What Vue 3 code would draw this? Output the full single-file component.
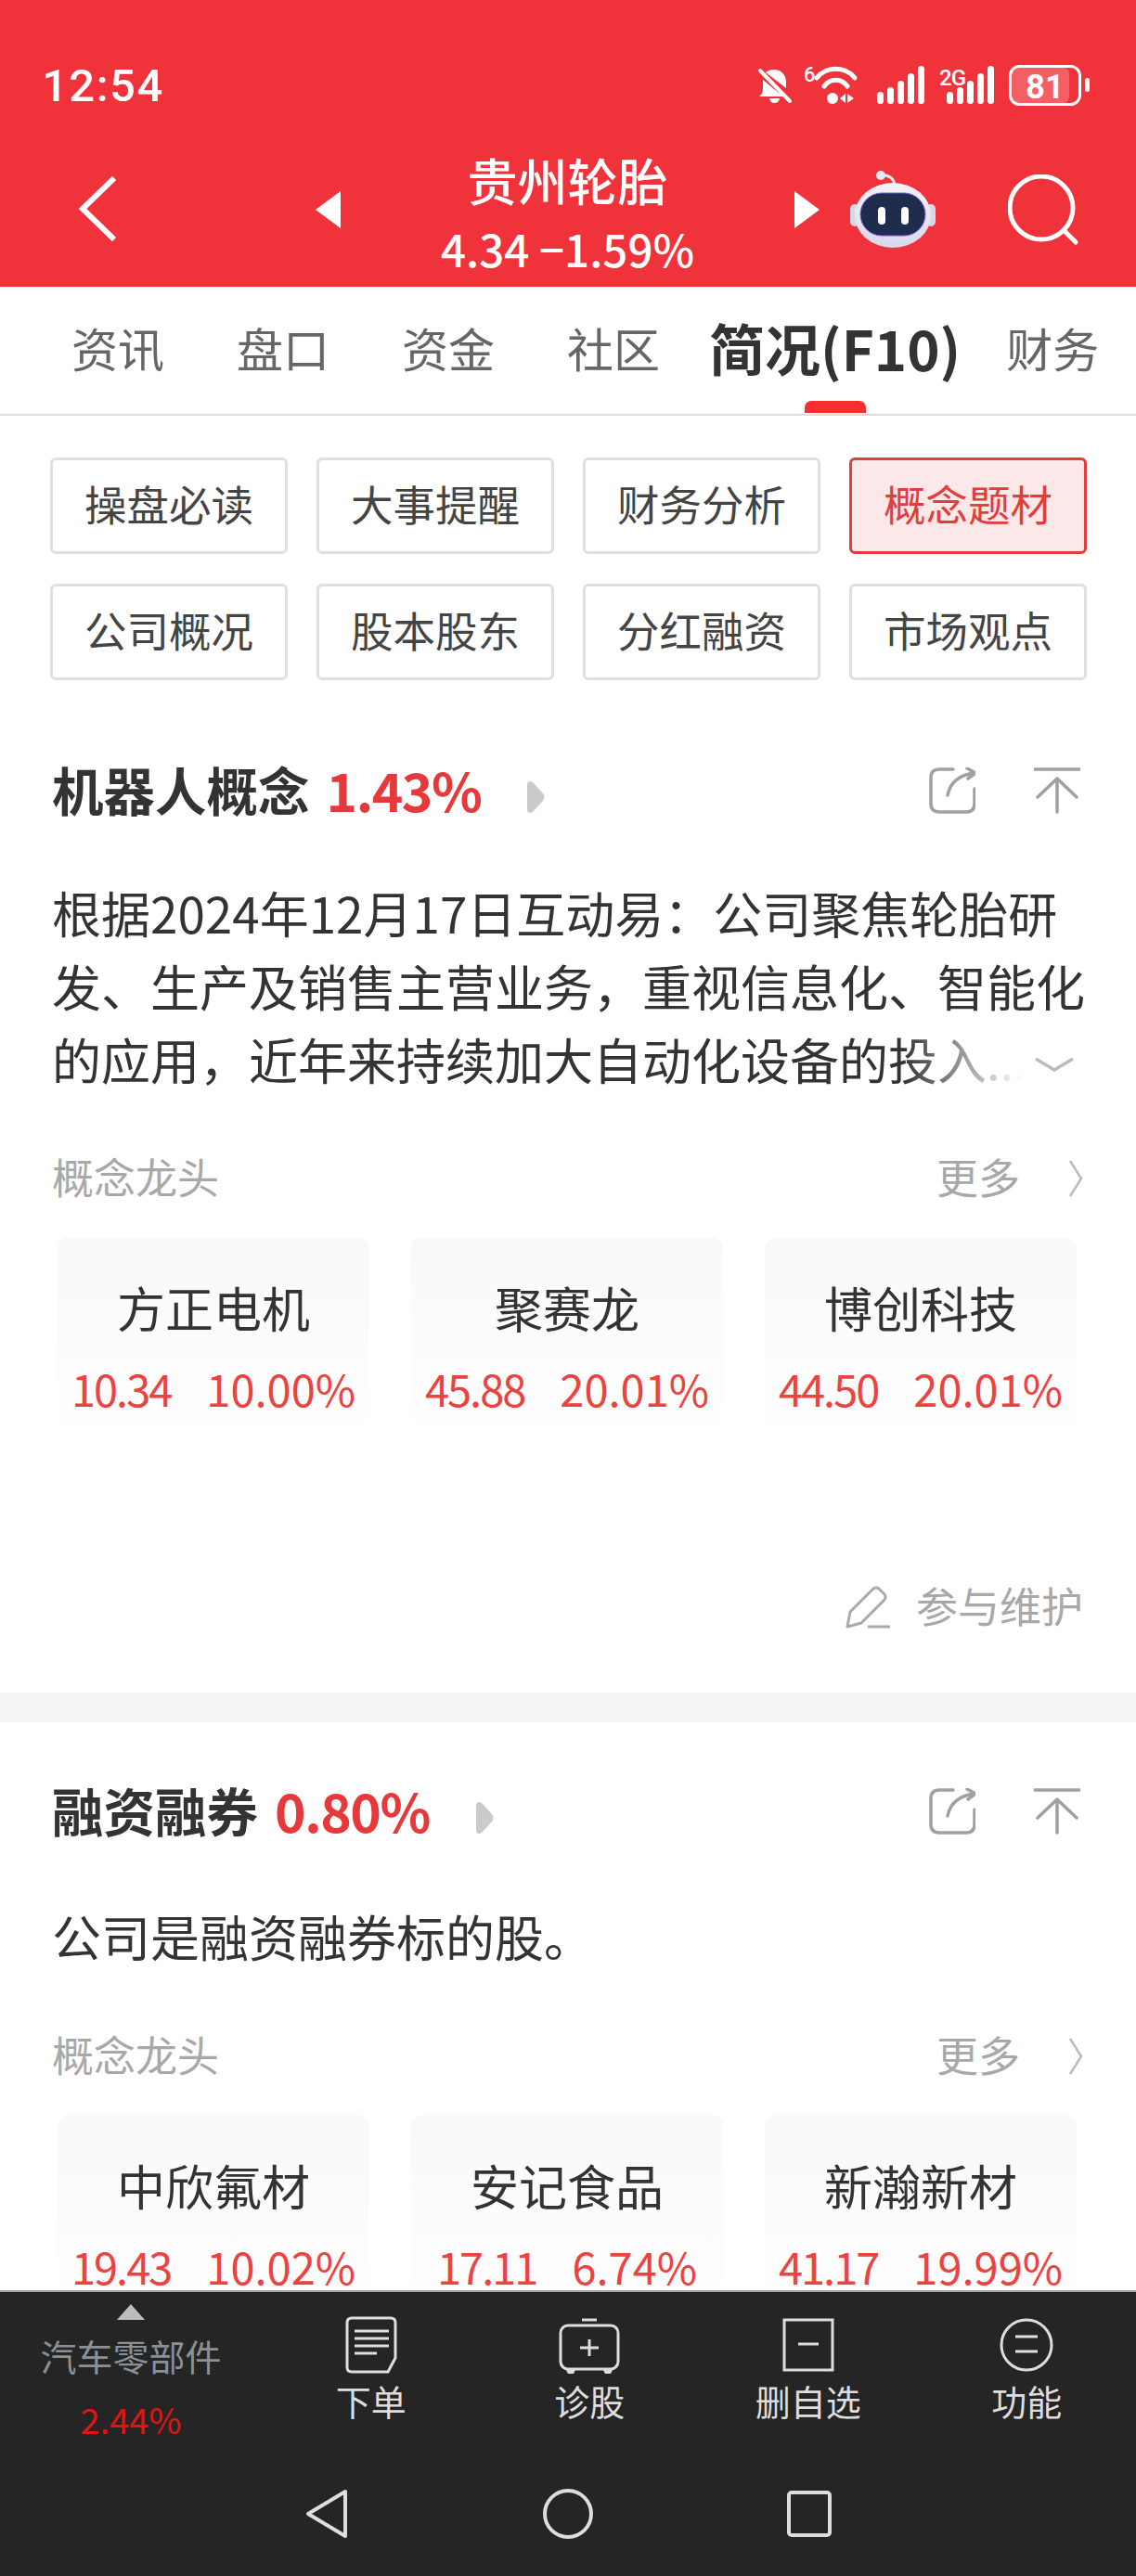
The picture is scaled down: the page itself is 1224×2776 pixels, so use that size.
<script setup>
const tabs = ['资讯', '盘口', '资金', '社区', '简况(F10)', '财务']
const chips = ['操盘必读', '大事提醒', '财务分析', '概念题材', '公司概况', '股本股东', '分红融资', '市场观点']
const sections = [
  {
    name: '机器人概念', pct: '1.43%', fold: true,
    lines: ['根据2024年12月17日互动易：公司聚焦轮胎研', '发、生产及销售主营业务，重视信息化、智能化', '的应用，近年来持续加大自动化设备的投入...'],
    cards: [
      { n: '方正电机', p: '10.34', c: '10.00%' },
      { n: '聚赛龙', p: '45.88', c: '20.01%' },
      { n: '博创科技', p: '44.50', c: '20.01%' }
    ]
  },
  {
    name: '融资融券', pct: '0.80%', fold: false,
    lines: ['公司是融资融券标的股。'],
    cards: [
      { n: '中欣氟材', p: '19.43', c: '10.02%' },
      { n: '安记食品', p: '17.11', c: '6.74%' },
      { n: '新瀚新材', p: '41.17', c: '19.99%' }
    ]
  }
]
const bars = [
  { x: 0, h: 13 }, { x: 11, h: 18 }, { x: 22, h: 25 }, { x: 33, h: 33 }, { x: 44, h: 41 }
]
</script>

<template>
  <div class="app">
    <header class="head">
      <div class="status">
        <span class="time">12:54</span>
        <div class="sicons">
          <svg class="s-bell" width="36" height="39" viewBox="0 0 36 39">
            <path d="M17 2c8 0 13 6 13 13v7l-22-17c2-2 5-3 9-3zM5 13l22 18H1c3-2 4-5 4-9z" fill="#fff" />
            <path d="M12 33h11c-1 4-3 5-5.500 5s-4.500-1-5.500-5z" fill="#fff" />
            <path d="M2 3l32 33" stroke="#fff" stroke-width="4" stroke-linecap="round" />
          </svg>
          <svg class="s-wifi" width="57" height="42" viewBox="0 0 57 42">
            <text x="0" y="17" class="s-six">6</text>
            <path d="M14 13C24 0 45 0 55 13" fill="none" stroke="#fff" stroke-width="5" stroke-linecap="round" />
            <path d="M22 22C28 13 41 13 47 22" fill="none" stroke="#fff" stroke-width="5" stroke-linecap="round" />
            <circle cx="31" cy="35" r="6" fill="#fff" />
            <path d="M39 35l6-5v10zM47 30l7 5-7 5z" fill="#fff" />
          </svg>
          <svg class="s-sig" width="51" height="42" viewBox="0 0 51 42">
            <rect v-for="b in bars" :key="b.x" :x="b.x" :y="41 - b.h" width="7" :height="b.h" rx="3.500" fill="#fff" />
          </svg>
          <svg class="s-sig2" width="60" height="42" viewBox="0 0 60 42">
            <text x="0" y="21" class="s-2g">2G</text>
            <g transform="translate(8 0)">
              <rect v-for="b in bars" :key="b.x" :x="b.x" :y="41 - b.h" width="7" :height="b.h" rx="3.500" fill="#fff" />
            </g>
          </svg>
          <svg class="s-bat" width="87" height="44" viewBox="0 0 87 44">
            <rect x="2" y="2" width="63" height="40" rx="8" fill="#fff" fill-opacity="0.22" />
            <rect x="1.500" y="1.500" width="75" height="41" rx="10" fill="none" stroke="#fff" stroke-width="3" />
            <rect x="82" y="14" width="5" height="15" rx="2.500" fill="#fff" />
            <text x="39" y="36" class="s-81">81</text>
          </svg>
        </div>
      </div>
      <div class="nav">
        <svg class="back" width="41" height="70" viewBox="0 0 41 70">
          <path d="M39 2L5 35l34 33" fill="none" stroke="#fff" stroke-width="6" />
        </svg>
        <svg class="tri" width="27" height="40" viewBox="0 0 27 40"><path d="M27 0V40L0 20z" fill="#fff" /></svg>
        <div class="stock">
          <div class="sname">贵州轮胎</div>
          <div class="sprice">4.34 −1.59%</div>
        </div>
        <svg class="tri" width="27" height="40" viewBox="0 0 27 40"><path d="M0 0V40L27 20z" fill="#fff" /></svg>
        <svg class="robot" width="92" height="83" viewBox="0 0 92 83">
          <defs>
            <linearGradient id="rb" x1="0" y1="0" x2="0" y2="1">
              <stop offset="0" stop-color="#f4f3fb" />
              <stop offset="1" stop-color="#d9d8ec" />
            </linearGradient>
          </defs>
          <path d="M33 5C41 4 47 8 48 15" fill="none" stroke="#e9e9f4" stroke-width="3" />
          <circle cx="33" cy="5" r="5" fill="#e9e9f4" />
          <rect x="0" y="36" width="10" height="24" rx="5" fill="#d6d8ea" />
          <rect x="82" y="36" width="10" height="24" rx="5" fill="#d6d8ea" />
          <ellipse cx="46" cy="48" rx="41" ry="35" fill="url(#rb)" />
          <rect x="11" y="24" width="70" height="46" rx="23" fill="#1e2c4e" stroke="#7a5fd0" stroke-width="1" />
          <rect x="30" y="39" width="8" height="19" rx="4" fill="#fff" />
          <rect x="55" y="39" width="8" height="19" rx="4" fill="#fff" />
        </svg>
        <svg class="search" width="76" height="76" viewBox="0 0 76 76">
          <circle cx="36" cy="36" r="34" fill="none" stroke="#fff" stroke-width="5" />
          <path d="M60 60l13 13" stroke="#fff" stroke-width="5" stroke-linecap="round" />
        </svg>
      </div>
    </header>

    <nav class="tabs">
      <div v-for="t in tabs" :key="t" class="tab" :class="{ active: t === '简况(F10)' }">
        {{ t }}
        <i v-if="t === '简况(F10)'" class="ind"></i>
      </div>
    </nav>

    <main class="content">
      <div class="chips">
        <div v-for="c in chips" :key="c" class="chip" :class="{ on: c === '概念题材' }">{{ c }}</div>
      </div>

      <section v-for="(s, i) in sections" :key="s.name" class="sec" :class="{ second: i === 1 }">
        <div class="sec-title">
          <span class="sec-name">{{ s.name }}</span>
          <span class="sec-pct">{{ s.pct }}</span>
          <svg class="sec-tri" width="22" height="36" viewBox="0 0 22 36">
            <path d="M2 5c0-4 3-5 6-3l11 12c2 2 2 6 0 8L8 34c-3 2-6 1-6-3z" fill="#cbcbcb" />
          </svg>
          <span class="grow"></span>
          <svg width="50" height="50" viewBox="0 0 50 50" class="share">
            <path d="M26 2H11Q2 2 2 11V39Q2 48 11 48H40Q49 48 49 39V23" fill="none" stroke="#a0a0a0" stroke-width="3.500" stroke-linecap="round" />
            <path d="M20 30C23 15 33 8 49 6M41 1l9 5-8 6" fill="none" stroke="#a0a0a0" stroke-width="3.500" stroke-linecap="round" stroke-linejoin="round" />
          </svg>
          <svg width="50" height="50" viewBox="0 0 50 50" class="totop">
            <path d="M1 2H49M25 12V48M4 32L25 12 46 32" fill="none" stroke="#a0a0a0" stroke-width="3.500" stroke-linecap="round" stroke-linejoin="round" />
          </svg>
        </div>
        <div class="para">
          <div v-for="l in s.lines" :key="l" class="pline">{{ l }}</div>
          <template v-if="s.fold">
            <div class="fade"></div>
            <svg class="more-down" width="44" height="16" viewBox="0 0 44 16">
              <path d="M2 2L22 14 42 2" fill="none" stroke="#bbb" stroke-width="3.500" />
            </svg>
          </template>
        </div>
        <div class="lead">
          <span class="lead-t">概念龙头</span>
          <span class="grow"></span>
          <span class="lead-t">更多</span>
          <svg class="lead-chev" width="16" height="42" viewBox="0 0 16 42">
            <path d="M2 2L14 21 2 40" fill="none" stroke="#bbb" stroke-width="2.500" />
          </svg>
        </div>
        <div class="cards">
          <div v-for="c in s.cards" :key="c.n" class="card">
            <div class="cname">{{ c.n }}</div>
            <div class="cval"><span class="cprice">{{ c.p }}</span><span>{{ c.c }}</span></div>
          </div>
        </div>
        <template v-if="i === 0">
          <div class="maintain">
            <svg width="48" height="46" viewBox="0 0 48 46">
              <path d="M2 44L5 28 30 3q3-2 6 0l6 6q2 3 0 6L17 40z" fill="none" stroke="#aaa" stroke-width="3" stroke-linejoin="round" />
              <path d="M24 44H48" stroke="#aaa" stroke-width="3" />
            </svg>
            <span class="lead-t">参与维护</span>
          </div>
          <div class="band"></div>
        </template>
      </section>
    </main>

    <footer class="bottom">
      <div class="actions">
        <div class="sector">
          <svg width="30" height="17" viewBox="0 0 30 17"><path d="M15 0L30 17H0z" fill="#bdbdbd" /></svg>
          <div class="sector-name">汽车零部件</div>
          <div class="sector-pct">2.44%</div>
        </div>
        <div class="act">
          <svg width="80" height="64" viewBox="0 0 80 64">
            <path d="M19 3H61q5 0 5 5V46L58 61H19q-5 0-5-5V8q0-5 5-5z" fill="none" stroke="#ddd" stroke-width="3" />
            <path d="M22 17H59M22 25H59M22 33H59M22 41H46" stroke="#ddd" stroke-width="3" />
          </svg>
          <span>下单</span>
        </div>
        <div class="act">
          <svg width="80" height="64" viewBox="0 0 80 64">
            <path d="M32 5H48" stroke="#ddd" stroke-width="3" />
            <rect x="9" y="11" width="62" height="47" rx="8" fill="none" stroke="#ddd" stroke-width="3" />
            <path d="M15 59h10l-2 4h-6zM55 59h10l-2 4h-6z" fill="#ddd" />
            <path d="M30 35H50M40 26V44" stroke="#ddd" stroke-width="3" />
          </svg>
          <span>诊股</span>
        </div>
        <div class="act">
          <svg width="80" height="64" viewBox="0 0 80 64">
            <rect x="14" y="5" width="52" height="54" fill="none" stroke="#ddd" stroke-width="3" />
            <path d="M29 31H51" stroke="#ddd" stroke-width="3" />
          </svg>
          <span>删自选</span>
        </div>
        <div class="act">
          <svg width="80" height="64" viewBox="0 0 80 64">
            <circle cx="40" cy="32" r="27" fill="none" stroke="#ddd" stroke-width="3" />
            <path d="M28 23H52M28 39H52" stroke="#ddd" stroke-width="3" />
          </svg>
          <span>功能</span>
        </div>
      </div>
      <div class="sysnav">
        <div class="sysitem">
          <svg width="46" height="54" viewBox="0 0 46 54">
            <path d="M43 3V51L3 27z" fill="none" stroke="#ddd" stroke-width="4" stroke-linejoin="round" />
          </svg>
        </div>
        <div class="sysitem">
          <svg width="54" height="54" viewBox="0 0 54 54">
            <circle cx="27" cy="27" r="25" fill="none" stroke="#ddd" stroke-width="4" />
          </svg>
        </div>
        <div class="sysitem">
          <svg width="48" height="50" viewBox="0 0 48 50">
            <rect x="2" y="2" width="44" height="46" rx="3" fill="none" stroke="#ddd" stroke-width="4" />
          </svg>
        </div>
      </div>
    </footer>
  </div>
</template>

<style scoped>
.app {
  width: 1224px;
  height: 2776px;
  display: flex;
  flex-direction: column;
  overflow: hidden;
  background: #fff;
  font-family: "Noto Sans CJK SC", "Noto Sans", sans-serif;
  color: #333;
}
.head {
  background: #f0323a;
  height: 309px;
  flex: none;
  color: #fff;
}
.status {
  height: 150px;
  padding: 34px 50px 0 45px;
  box-sizing: border-box;
  display: flex;
  align-items: center;
  justify-content: space-between;
}
.time {
  font-family: Roboto, sans-serif;
  font-weight: 500;
  font-size: 49px;
  letter-spacing: 1.5px;
}
.sicons { display: flex; align-items: center; }
.sicons svg { overflow: visible; }
.s-wifi { margin-left: 13px; }
.s-sig { margin-left: 22px; }
.s-sig2 { margin-left: 16px; }
.s-bat { margin-left: 15px; }
.s-six, .s-2g, .s-81 { fill: #fff; font-family: Roboto, sans-serif; }
.s-six { font-size: 22px; font-weight: 500; }
.s-2g { font-size: 24px; font-weight: 500; letter-spacing: -1px; }
.s-81 { font-size: 36px; font-weight: 700; text-anchor: middle; }
.nav {
  height: 159px;
  display: flex;
  align-items: center;
  padding: 0 0 0 84px;
}
.back { margin-right: 215px; margin-top: -9px; }
.tri { margin-top: -8px; }
.stock { width: 489px; text-align: center; }
.sname { font-size: 54px; line-height: 74px; font-weight: 500; margin-top: 4px; }
.sprice { font-size: 47.5px; line-height: 74px; font-weight: 500; margin-bottom: 2px; }
.robot { margin-left: 33px; margin-top: -8px; }
.search { margin-left: 78px; margin-top: -8px; }

.tabs {
  flex: none;
  height: 130px;
  padding: 0 0 7px 38px;
  border-bottom: 2px solid #ddd;
  display: flex;
  align-items: center;
  font-size: 50px;
  color: #666;
  white-space: nowrap;
}
.tab { padding: 0 39px; position: relative; line-height: 130px; }
.tab.active { padding: 0 14px; margin-right: -4px; font-size: 60px; font-weight: 700; color: #333; }
.ind {
  position: absolute;
  left: 50%;
  margin-left: -33px;
  bottom: -6px;
  width: 66px;
  height: 13px;
  border-radius: 7px 7px 0 0;
  background: #f5302e;
}
.content { flex: 1; min-height: 0; }
.chips {
  padding: 45px 0 0 54px;
  display: grid;
  grid-template-columns: repeat(4, 256px);
  column-gap: 31px;
  row-gap: 32px;
}
.chip {
  height: 104px;
  box-sizing: border-box;
  padding-bottom: 6px;
  border: 3px solid #e0e0e0;
  border-radius: 6px;
  display: flex;
  align-items: center;
  justify-content: center;
  font-size: 45.5px;
  color: #444;
}
.chip.on { border-color: #e23c3c; background: #fde8e9; color: #e23c3c; }
.sec { margin-top: 70px; }
.sec.second { margin-top: 47px; }
.sec-title {
  height: 100px;
  display: flex;
  align-items: center;
  padding: 0 60px 0 56px;
}
.sec-name { font-size: 55.5px; font-weight: 700; color: #333; margin-bottom: 7px; }
.sec-pct { font-size: 57px; font-weight: 700; color: #e6393b; margin: 0 0 7px 18px; letter-spacing: -1.5px; }
.sec-tri { margin-left: 48px; margin-top: 12px; }
.grow { flex: 1; }
.totop { margin-left: 63px; }
.share, .totop { margin-top: -2px; }
.para {
  position: relative;
  margin: 41px 0 0 56px;
  width: 1116px;
  font-size: 53px;
  line-height: 79px;
  color: #333;
  white-space: nowrap;
}
.second .para { margin-top: 44px; }
.fade {
  position: absolute;
  right: 0;
  bottom: 0;
  width: 200px;
  height: 79px;
  background: linear-gradient(to right, rgba(255, 255, 255, 0), #fff 65%);
}
.more-down { position: absolute; right: 14px; bottom: 26px; }
.lead {
  margin-top: 59px;
  height: 60px;
  padding: 0 57px 0 56px;
  display: flex;
  align-items: center;
  font-size: 45px;
  color: #a8a8a8;
}
.lead-t { margin-bottom: 6px; }
.lead-chev { margin-left: 52px; }
.second .lead { margin-top: 60px; }
.cards {
  margin-top: 33px;
  padding-left: 62px;
  display: grid;
  grid-template-columns: repeat(3, 336px);
  column-gap: 45px;
}
.card {
  height: 216px;
  box-sizing: border-box;
  padding-top: 46px;
  border-radius: 12px 12px 0 0;
  background: linear-gradient(#f9f9f9, #fdfdfd 80%, #fff);
  text-align: center;
}
.cname { font-size: 52px; line-height: 60px; color: #333; }
.cval {
  margin-top: 35px;
  font-size: 47px;
  line-height: 44px;
  color: #ea4340;
  font-weight: 400;
  display: flex;
  justify-content: center;
  gap: 38px;
}
.cprice { letter-spacing: -2px; }
.maintain {
  margin-top: 153px;
  height: 60px;
  padding-right: 57px;
  display: flex;
  align-items: center;
  justify-content: flex-end;
  gap: 28px;
  font-size: 45px;
  color: #a8a8a8;
}
.band { margin-top: 62px; height: 32px; background: #f5f5f5; }

.bottom {
  flex: none;
  position: relative;
  z-index: 1;
  height: 308px;
  box-sizing: border-box;
  background: #252525;
  border-top: 2px solid #a5a5a5;
}
.actions {
  height: 180px;
  display: grid;
  grid-template-columns: 282px repeat(4, 235.5px);
}
.sector {
  display: flex;
  flex-direction: column;
  align-items: center;
  padding-top: 13px;
}
.sector-name { font-size: 39px; line-height: 50px; color: #8b9095; margin-top: 13px; white-space: nowrap; }
.sector-pct { font-size: 38px; line-height: 50px; color: #e01414; margin-top: 19px; }
.act {
  display: flex;
  flex-direction: column;
  align-items: center;
  padding-top: 25px;
  color: #ddd;
  font-size: 38px;
}
.act svg { display: block; }
.act span { line-height: 50px; margin-top: 3px; white-space: nowrap; }
.sysnav { height: 118px; display: flex; justify-content: center; }
.sysitem { width: 260px; display: flex; align-items: center; justify-content: center; }
</style>
